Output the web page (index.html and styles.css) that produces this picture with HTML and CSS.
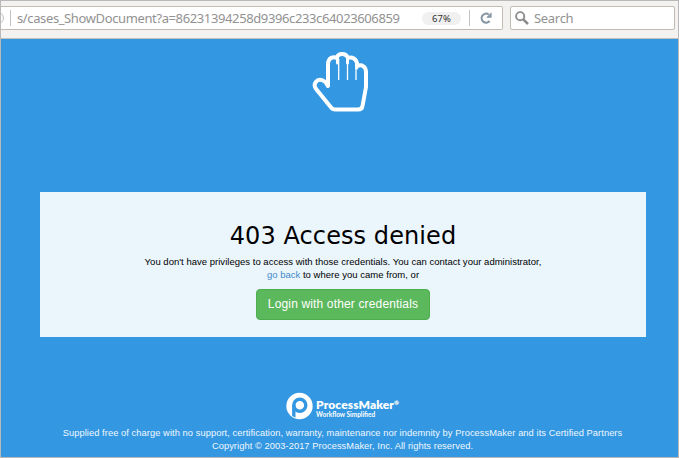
FILE: index.html
```
<!DOCTYPE html>
<html lang="en">
<head>
<meta charset="utf-8">
<title>403 Access denied</title>
<link rel="stylesheet" href="styles.css">
</head>
<body>
<div class="window">
  <header class="toolbar">
    <div class="address">
      <svg class="info" width="4" height="16" viewBox="0 0 4 16"><circle cx="-3" cy="8" r="5.5" fill="none" stroke="#c0c0c0"/></svg>
      <i class="divider"></i>
      <span class="url">s/cases_ShowDocument?a=86231394258d9396c233c64023606859</span>
      <span class="zoom">67%</span>
      <i class="divider"></i>
      <svg class="reload" width="12" height="12" viewBox="0 0 12 12"><path d="M9.6 9A4.500 4.500 0 1 1 8.800 2.500" fill="none" stroke="#8796a4" stroke-width="2.100"/><path d="M11.600.2v5.600H6z" fill="#8796a4"/></svg>
    </div>
    <div class="search">
      <svg width="14" height="14" viewBox="0 0 14 14" fill="none" stroke="#8c8c8c"><circle cx="5.2" cy="5.2" r="4.1" stroke-width="1.9"/><path d="M8.3 8.3l4.7 4.7" stroke-width="2.5"/></svg>
      <span>Search</span>
    </div>
  </header>
  <main class="page">
    <svg class="hand" width="58" height="62" viewBox="0 0 58 62" fill="none" stroke="#fff" stroke-linejoin="round" stroke-linecap="round"><path d="M16 35V13.500C16 6 22 5.500 24.500 7C26 1.500 34 1.500 36 7C39.500 5.500 45 7 45.500 15C50 13 54 16 54 21V36L50.500 55Q50 58.500 46 58.500H23Q21 58.500 19.500 57L4.500 38.500C0 33 5 27 11 29.500C13.500 30.500 15 33 16 35Z" stroke-width="4"/><path d="M26.700 8v21M35.500 8v21M44 12v17" stroke-width="1.300" stroke-linecap="butt"/><path d="M25.500 7v5M35.500 7v5M44.700 13v4" stroke-width="3"/></svg>
    <section class="panel">
      <h1>403 Access denied</h1>
      <p class="message"><span class="line first">You don't have privileges to access with those credentials. You can contact your administrator,</span><span class="line"><a>go back</a> to where you came from, or</span></p>
      <button class="login">Login with other credentials</button>
    </section>
    <footer class="footer">
      <div class="brand">
        <svg width="27" height="28" viewBox="0 0 27 28"><circle cx="13.500" cy="14" r="13.200" fill="#fff"/><circle cx="13.800" cy="13.300" r="6" fill="none" stroke="#3397e2" stroke-width="3.400"/><path d="M6.100 13.300H9.500V25.600Q7.500 24.900 6.100 23.700Z" fill="#3397e2"/></svg>
        <div class="names"><b class="product">ProcessMaker<small>®</small></b><b class="tagline">Workflow Simplified</b></div>
      </div>
      <p class="legal">Supplied free of charge with no support, certification, warranty, maintenance nor indemnity by ProcessMaker and its Certified Partners</p>
      <p class="legal copyright">Copyright © 2003-2017 ProcessMaker, Inc. All rights reserved.</p>
    </footer>
  </main>
</div>
</body>
</html>
```
FILE: styles.css
```
* { box-sizing: border-box; }
body { margin: 0; font-family: "Liberation Sans", sans-serif; }
.window { width: 679px; height: 458px; border: 1px solid #b9b9b9; background: #3397e2; overflow: hidden; }
.toolbar { height: 38px; padding: 5px 3px 8px 0; display: flex; gap: 7px; background: #f4f2f0; border-bottom: 1px solid #c3beb8; font-family: "Noto Sans", sans-serif; }
.address, .search { height: 24px; border: 1px solid #c1bbb1; border-radius: 2px; background: #fff; display: flex; align-items: center; }
.address { width: 502px; border-left: 0; border-radius: 0 2px 2px 0; }
.info { flex: none; }
.divider { width: 1px; height: 16px; background: #c3c3c3; }
.address .info + .divider { margin: 0 5px 0 5px; }
.url { width: 406px; padding-left: 1px; white-space: nowrap; font-size: 13px; line-height: 22px; color: #929292; letter-spacing: -0.38px; }
.zoom { width: 39px; height: 13px; border-radius: 7px; background: #f0f0f0; text-align: center; font-size: 9.5px; line-height: 13px; color: #333; }
.zoom + .divider { margin: 0 10px 0 8px; }
.search { width: 165px; padding-left: 4px; gap: 5px; color: #929292; font-size: 13px; letter-spacing: -0.3px; }
.page { display: flex; flex-direction: column; align-items: center; padding-left: 6px; }
.hand { margin-top: 12px; margin-left: -3px; }
.panel { width: 606px; height: 145px; margin-top: 79px; margin-left: 1px; background: #eaf5fc; display: flex; flex-direction: column; align-items: center; color: #000; }
h1 { margin: 30px 0 0; font: 24px/28px "DejaVu Sans", sans-serif; white-space: nowrap; letter-spacing: 0.08px; }
.message { margin: 5px 0 0; font-size: 9.5px; line-height: 13px; text-align: center; white-space: nowrap; letter-spacing: 0.02px; }
.line { display: block; }
.message a { color: #428bca; }
.login { width: 174px; height: 31px; margin-top: 8px; padding: 0; background: #5cb85c; border: 1px solid #4cae4c; border-radius: 4px; color: #fff; font: 12px/29px "Liberation Sans", sans-serif; letter-spacing: 0.15px; white-space: nowrap; }
.footer { margin-top: 55px; color: #f1f8fd; display: flex; flex-direction: column; align-items: center; }
.brand { display: flex; height: 28px; gap: 3px; color: #fff; }
.names { display: flex; flex-direction: column; padding-top: 6px; font-family: Lato, sans-serif; }
.product { font-size: 12px; line-height: 13px; font-weight: 800; letter-spacing: 0.08px; white-space: nowrap; }
.product small { font-size: 6px; vertical-align: 4px; line-height: 1px; }
.tagline { font-size: 6.5px; line-height: 8px; }
.legal { margin: 7px 0 0; font-size: 9.3px; line-height: 13px; white-space: nowrap; letter-spacing: 0.07px; }
.copyright { margin: 0; }
```
